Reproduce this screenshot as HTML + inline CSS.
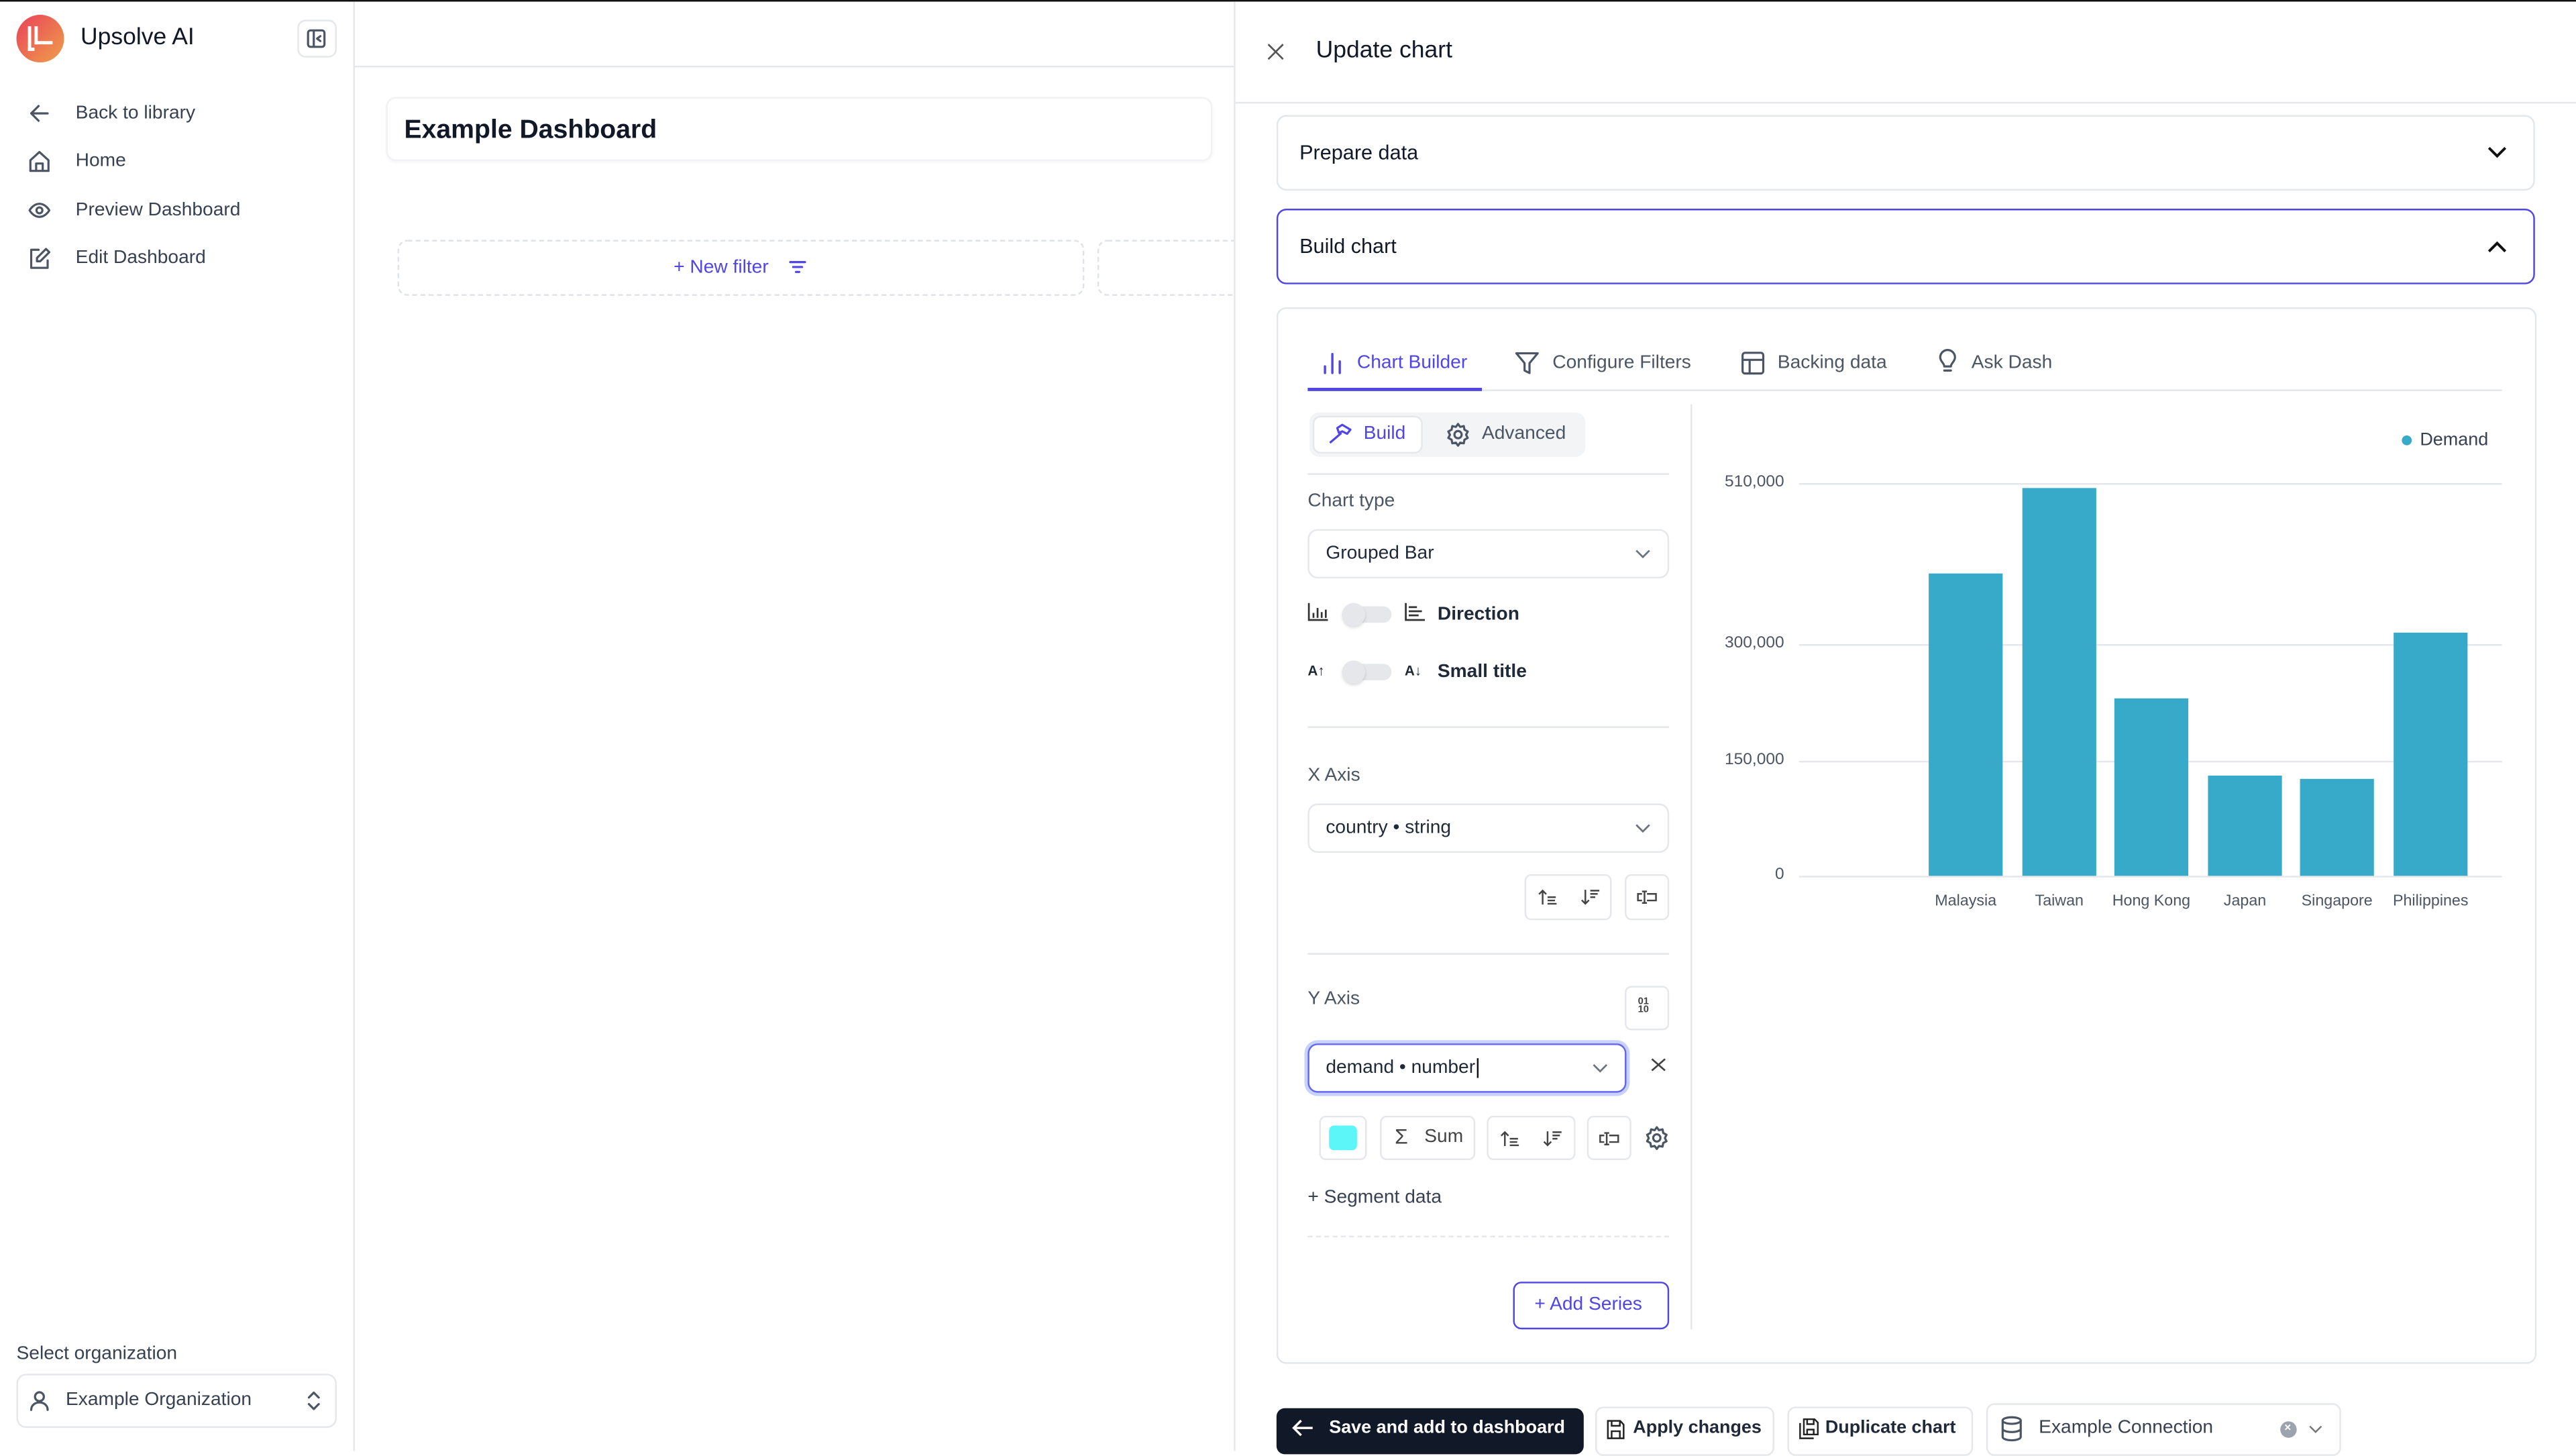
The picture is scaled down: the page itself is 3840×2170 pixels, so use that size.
<!DOCTYPE html>
<html><head><meta charset="utf-8"><style>
*{box-sizing:border-box;margin:0;padding:0}
html,body{width:3840px;height:2160px;overflow:hidden;background:#fff}
#w{position:absolute;left:0;top:0;width:1568px;height:882px;transform:scale(2.44898);transform-origin:0 0;font-family:"Liberation Sans",sans-serif;color:#111827;background:#fff;border-top:1px solid #111}
.a{position:absolute}
.t{position:absolute;white-space:nowrap;line-height:1}
.nav{font-size:11.5px;color:#374151}
.box{position:absolute;border:1px solid #e5e7eb;border-radius:6px;background:#fff}
.lbl{font-size:11.5px;color:#4b5563}
.hl{position:absolute;height:1px;background:#e5e7eb}
svg{position:absolute;overflow:visible}
.ic{fill:none;stroke:#4b5563;stroke-width:1.3;stroke-linecap:round;stroke-linejoin:round}
</style></head><body><div id="w">
<div class="a" style="left:215px;top:0;width:1px;height:882px;background:#e5e7eb"></div>
<div class="a" style="left:10px;top:8px;width:29px;height:29px;border-radius:50%;background:linear-gradient(135deg,#e8405a,#f0a04a)"></div>
<div class="a" style="left:17px;top:15px;width:4px;height:15px;border-left:2px solid #fff;border-bottom:2px solid #fff"></div>
<div class="a" style="left:21px;top:15px;width:11px;height:11px;border-left:2px solid #fff;border-bottom:2px solid #fff"></div>
<div class="t" style="left:49px;top:15px;font-size:14.5px;color:#111827">Upsolve AI</div>
<div class="a" style="left:181px;top:11px;width:24px;height:23px;border:1px solid #e5e7eb;border-radius:5px"></div>
<svg style="left:187px;top:17px" width="12" height="12"><rect x="0.5" y="0.5" width="10" height="10" rx="1.5" class="ic"/><path d="M4 1v9M8 4l-2 1.5L8 7" class="ic"/></svg>
<svg style="left:17px;top:61px" width="14" height="14"><path d="M12 7H2M6.5 2.5L2 7l4.5 4.5" class="ic"/></svg>
<div class="t nav" style="left:46px;top:63px">Back to library</div>
<svg style="left:17px;top:90px" width="14" height="14"><path d="M1.5 6.5L7 1.5l5.5 5v6.5h-11zM5 13V8.5h4V13" class="ic"/></svg>
<div class="t nav" style="left:46px;top:92px">Home</div>
<svg style="left:17px;top:120px" width="14" height="14"><path d="M1 7s2.2-4 6-4 6 4 6 4-2.2 4-6 4-6-4-6-4z" class="ic"/><circle cx="7" cy="7" r="1.8" class="ic"/></svg>
<div class="t nav" style="left:46px;top:122px">Preview Dashboard</div>
<svg style="left:17px;top:149px" width="14" height="14"><path d="M6.5 2H2v11h10V8.5M11 1.5l2 2L7.5 9H5.5V7z" class="ic"/></svg>
<div class="t nav" style="left:46px;top:151px">Edit Dashboard</div>
<div class="t" style="left:10px;top:818px;font-size:11.5px;color:#374151">Select organization</div>
<div class="box" style="left:10px;top:835px;width:195px;height:33px"></div>
<svg style="left:18px;top:845px" width="13" height="13"><circle cx="6" cy="4" r="2.7" class="ic"/><path d="M1 12c0-3 2.5-4.5 5-4.5s5 1.5 5 4.5" class="ic"/></svg>
<div class="t" style="left:40px;top:846px;font-size:11.5px;color:#374151">Example Organization</div>
<svg style="left:187px;top:845px" width="8" height="13"><path d="M1 4.5L4 1.5l3 3M1 8.5l3 3 3-3" class="ic" stroke-width="1"/></svg>
<div class="hl" style="left:216px;top:39px;width:535px"></div>
<div class="a" style="left:235px;top:58px;width:503px;height:39px;border:1px solid #f1f2f4;border-radius:6px;box-shadow:0 1px 2px rgba(0,0,0,.04)"></div>
<div class="t" style="left:246px;top:71px;font-size:16px;font-weight:bold;color:#111827">Example Dashboard</div>
<div class="a" style="left:242px;top:145px;width:418px;height:34px;border:1px dashed #dfe2e7;border-radius:6px"></div>
<div class="a" style="left:668px;top:145px;width:90px;height:34px;border:1px dashed #dfe2e7;border-radius:6px"></div>
<div class="t" style="left:410px;top:157px;font-size:11.5px;color:#4f46e5">+ New filter</div>
<svg style="left:480px;top:157px" width="11" height="10"><path d="M1 1.5h9M2.8 4.5h5.4M4.5 7.5h2" stroke="#4f46e5" stroke-width="1.3" fill="none" stroke-linecap="round"/></svg>
<div class="t" style="left:755px;top:441px;font-size:9px;color:#555;letter-spacing:-1px">⠿</div>
<div class="a" style="left:751px;top:0;width:817px;height:882px;background:#fff;border-left:1px solid #e5e7eb"></div>
<svg style="left:771px;top:25px" width="10" height="10"><path d="M1 1l9 9M10 1l-9 9" stroke="#555" stroke-width="1.1"/></svg>
<div class="t" style="left:801px;top:23px;font-size:14.5px;color:#111827">Update chart</div>
<div class="hl" style="left:752px;top:61px;width:816px"></div>
<div class="box" style="left:777px;top:69px;width:766px;height:46px;border-color:#e3e6ea"></div>
<div class="t" style="left:791px;top:86px;font-size:12.5px;color:#111827">Prepare data</div>
<svg style="left:1514px;top:88px" width="12" height="8"><path d="M1 1l5 5 5-5" stroke="#111" stroke-width="1.6" fill="none"/></svg>
<div class="box" style="left:777px;top:126px;width:766px;height:46px;border-color:#4f46e5"></div>
<div class="t" style="left:791px;top:143px;font-size:12.5px;color:#111827">Build chart</div>
<svg style="left:1514px;top:145px" width="12" height="8"><path d="M1 7l5-5 5 5" stroke="#111" stroke-width="1.6" fill="none"/></svg>
<div class="box" style="left:777px;top:186px;width:767px;height:643px;border-color:#e3e6ea"></div>
<div class="hl" style="left:796px;top:236px;width:727px"></div>
<div class="a" style="left:796px;top:235px;width:106px;height:2px;background:#4f46e5"></div>
<svg style="left:805px;top:213px" width="12" height="14"><path d="M1.5 13V9M6 13V1.5M10.5 13V6" stroke="#4f46e5" stroke-width="1.4" fill="none" stroke-linecap="round"/></svg>
<div class="t" style="left:826px;top:215px;font-size:11.5px;color:#4f46e5">Chart Builder</div>
<svg style="left:922px;top:213px" width="15" height="14"><path d="M1 1h13L9 7v6L6 11.5V7z" class="ic"/></svg>
<div class="t" style="left:945px;top:215px;font-size:11.5px;color:#4b5563">Configure Filters</div>
<svg style="left:1060px;top:213px" width="14" height="14"><rect x="0.7" y="0.7" width="12.6" height="12.6" rx="1.5" class="ic"/><path d="M0.7 5h12.6M5 5v8.3" class="ic"/></svg>
<div class="t" style="left:1082px;top:215px;font-size:11.5px;color:#4b5563">Backing data</div>
<svg style="left:1180px;top:212px" width="11" height="15"><path d="M3.5 10C3.5 8 1 7 1 4.5a4.5 4.5 0 019 0C10 7 7.5 8 7.5 10zM3.5 12.5h4" class="ic"/></svg>
<div class="t" style="left:1200px;top:215px;font-size:11.5px;color:#4b5563">Ask Dash</div>
<div class="a" style="left:1029px;top:245px;width:1px;height:563px;background:#e5e7eb"></div>
<div class="a" style="left:797px;top:250px;width:168px;height:27px;background:#f3f4f6;border-radius:6px"></div>
<div class="a" style="left:799px;top:252px;width:67px;height:23px;background:#fff;border:1px solid #e5e7eb;border-radius:5px"></div>
<svg style="left:808px;top:256px" width="16" height="14"><path d="M1.5 12.5l7-6M6 3.5l3-2 5 3-2 2.5-3-1.5-2 1z" stroke="#4f46e5" stroke-width="1.3" fill="none" stroke-linejoin="round"/></svg>
<div class="t" style="left:830px;top:258px;font-size:11.5px;color:#4f46e5">Build</div>
<svg style="left:880px;top:256px" width="15" height="15"><circle cx="7.5" cy="7.5" r="2.2" class="ic"/><path d="M7.5 1l1.3 1.8 2.2-.5.4 2.2 2 1.1-1 2 1 1.9-2 1.1-.4 2.2-2.2-.4-1.3 1.8-1.3-1.8-2.2.4-.4-2.2-2-1.1 1-1.9-1-2 2-1.1.4-2.2 2.2.5z" class="ic" stroke-width="1.1"/></svg>
<div class="t" style="left:902px;top:258px;font-size:11.5px;color:#4b5563">Advanced</div>
<div class="hl" style="left:796px;top:287px;width:220px"></div>
<div class="t lbl" style="left:796px;top:299px">Chart type</div>
<div class="box" style="left:796px;top:321px;width:220px;height:30px"></div>
<div class="t" style="left:807px;top:331px;font-size:11.5px;color:#1f2937">Grouped Bar</div>
<svg style="left:995px;top:333px" width="10" height="6"><path d="M1 1l4 4 4-4" stroke="#6b7280" stroke-width="1.1" fill="none"/></svg>
<svg style="left:796px;top:366px" width="13" height="11"><path d="M.7 0v10.3h11.6M3.5 9V6M6 9V3M8.5 9V5.5M11 9V4" stroke="#333" stroke-width="1.1" fill="none"/></svg>
<div class="a" style="left:817px;top:368px;width:30px;height:10px;border-radius:5px;background:#e5e7eb"></div>
<div class="a" style="left:817px;top:366px;width:14px;height:14px;border-radius:50%;background:#e5e7eb;box-shadow:0 1px 2px rgba(0,0,0,.15)"></div>
<svg style="left:855px;top:366px" width="13" height="11"><path d="M.7 0v10.3h11.6M2.5 2.5h5M2.5 5h8M2.5 7.5h6" stroke="#333" stroke-width="1.1" fill="none"/></svg>
<div class="t" style="left:875px;top:368px;font-size:11.5px;font-weight:bold;color:#1f2937">Direction</div>
<div class="t" style="left:796px;top:403px;font-size:8.5px;font-weight:bold;color:#1f2937">A↑</div>
<div class="a" style="left:817px;top:403px;width:30px;height:10px;border-radius:5px;background:#e5e7eb"></div>
<div class="a" style="left:817px;top:401px;width:14px;height:14px;border-radius:50%;background:#e5e7eb;box-shadow:0 1px 2px rgba(0,0,0,.15)"></div>
<div class="t" style="left:855px;top:403px;font-size:8.5px;font-weight:bold;color:#1f2937">A↓</div>
<div class="t" style="left:875px;top:403px;font-size:11.5px;font-weight:bold;color:#1f2937">Small title</div>
<div class="hl" style="left:796px;top:441px;width:220px"></div>
<div class="t lbl" style="left:796px;top:466px">X Axis</div>
<div class="box" style="left:796px;top:488px;width:220px;height:30px"></div>
<div class="t" style="left:807px;top:498px;font-size:11.5px;color:#1f2937">country • string</div>
<svg style="left:995px;top:500px" width="10" height="6"><path d="M1 1l4 4 4-4" stroke="#6b7280" stroke-width="1.1" fill="none"/></svg>
<div class="box" style="left:928px;top:531px;width:53px;height:28px;border-radius:4px"></div>
<div class="box" style="left:989px;top:531px;width:27px;height:28px;border-radius:4px"></div>
<svg style="left:936px;top:540px" width="12" height="10"><path d="M3 9.5V1M.8 3.2L3 1l2.2 2.2M6 5h5M6 7h4.5M6 9h5.5" stroke="#444" stroke-width="1" fill="none"/></svg>
<svg style="left:962px;top:540px" width="12" height="10"><path d="M3 0.5V9M.8 6.8L3 9l2.2-2.2M6 1h5.5M6 3h4.5M6 5h3" stroke="#444" stroke-width="1" fill="none"/></svg>
<svg style="left:996px;top:540px" width="13" height="10"><path d="M5 1.5v7M3.5 1.5h3M3.5 8.5h3M3.5 3H1v4h2.5M6.5 3H12v4H6.5" stroke="#444" stroke-width="1" fill="none"/></svg>
<div class="hl" style="left:796px;top:579px;width:220px"></div>
<div class="t lbl" style="left:796px;top:602px">Y Axis</div>
<div class="box" style="left:989px;top:599px;width:27px;height:27px;border-radius:4px"></div>
<div class="t" style="left:997px;top:607px;font-size:6px;line-height:5px;color:#444;font-weight:bold">01<br>10</div>
<div class="a" style="left:796px;top:634px;width:194px;height:30px;border:1.5px solid #6366f1;border-radius:6px;box-shadow:0 0 0 2px #c7d2fe"></div>
<div class="t" style="left:807px;top:644px;font-size:11.5px;color:#1f2937">demand • number<span style="border-left:1px solid #111;margin-left:1px"></span></div>
<svg style="left:969px;top:646px" width="10" height="6"><path d="M1 1l4 4 4-4" stroke="#6b7280" stroke-width="1.1" fill="none"/></svg>
<svg style="left:1005px;top:643px" width="9" height="8"><path d="M.5.5l8 7M8.5.5l-8 7" stroke="#444" stroke-width="1.1"/></svg>
<div class="box" style="left:803px;top:678px;width:29px;height:27px;border-radius:4px"></div>
<div class="a" style="left:809px;top:684px;width:17px;height:15px;background:#5cf6f8;border-radius:3px"></div>
<div class="box" style="left:840px;top:678px;width:58px;height:27px;border-radius:4px"></div>
<div class="t" style="left:849px;top:684px;font-size:13px;color:#444">Σ</div>
<div class="t" style="left:867px;top:686px;font-size:11.5px;color:#444">Sum</div>
<div class="box" style="left:905px;top:678px;width:54px;height:27px;border-radius:4px"></div>
<svg style="left:913px;top:687px" width="12" height="10"><path d="M3 9.5V1M.8 3.2L3 1l2.2 2.2M6 5h5M6 7h4.5M6 9h5.5" stroke="#444" stroke-width="1" fill="none"/></svg>
<svg style="left:939px;top:687px" width="12" height="10"><path d="M3 0.5V9M.8 6.8L3 9l2.2-2.2M6 1h5.5M6 3h4.5M6 5h3" stroke="#444" stroke-width="1" fill="none"/></svg>
<div class="box" style="left:966px;top:678px;width:27px;height:27px;border-radius:4px"></div>
<svg style="left:973px;top:687px" width="13" height="10"><path d="M5 1.5v7M3.5 1.5h3M3.5 8.5h3M3.5 3H1v4h2.5M6.5 3H12v4H6.5" stroke="#444" stroke-width="1" fill="none"/></svg>
<svg style="left:1001px;top:684px" width="15" height="15"><circle cx="7.5" cy="7.5" r="2.2" class="ic"/><path d="M7.5 1l1.3 1.8 2.2-.5.4 2.2 2 1.1-1 2 1 1.9-2 1.1-.4 2.2-2.2-.4-1.3 1.8-1.3-1.8-2.2.4-.4-2.2-2-1.1 1-1.9-1-2 2-1.1.4-2.2 2.2.5z" class="ic" stroke-width="1.1"/></svg>
<div class="t" style="left:796px;top:723px;font-size:11.5px;color:#374151">+ Segment data</div>
<div class="a" style="left:796px;top:751px;width:220px;border-top:1px dashed #e5e7eb"></div>
<div class="a" style="left:921px;top:779px;width:95px;height:29px;border:1px solid #4f46e5;border-radius:5px"></div>
<div class="t" style="left:934px;top:788px;font-size:11.5px;color:#4f46e5">+ Add Series</div>
<div class="a" style="left:1462px;top:264px;width:6px;height:6px;border-radius:50%;background:#38aac9"></div>
<div class="t" style="left:1473px;top:262px;font-size:11px;color:#374151">Demand</div>
<div class="hl" style="left:1095px;top:293px;width:428px"></div>
<div class="hl" style="left:1095px;top:391px;width:428px"></div>
<div class="hl" style="left:1095px;top:462px;width:428px"></div>
<div class="hl" style="left:1095px;top:532px;width:428px"></div>
<div class="t" style="right:482px;top:288px;font-size:10px;color:#4b5563">510,000</div>
<div class="t" style="right:482px;top:386px;font-size:10px;color:#4b5563">300,000</div>
<div class="t" style="right:482px;top:457px;font-size:10px;color:#4b5563">150,000</div>
<div class="t" style="right:482px;top:527px;font-size:10px;color:#4b5563">0</div>
<div class="a" style="left:1174px;top:348px;width:45px;height:184px;background:#38aac9"></div>
<div class="a" style="left:1231px;top:296px;width:45px;height:236px;background:#38aac9"></div>
<div class="a" style="left:1287px;top:424px;width:45px;height:108px;background:#38aac9"></div>
<div class="a" style="left:1344px;top:471px;width:45px;height:61px;background:#38aac9"></div>
<div class="a" style="left:1400px;top:473px;width:45px;height:59px;background:#38aac9"></div>
<div class="a" style="left:1457px;top:384px;width:45px;height:148px;background:#38aac9"></div>
<div class="t" style="left:1156px;width:81px;text-align:center;top:543px;font-size:9.5px;color:#4b5563">Malaysia</div>
<div class="t" style="left:1213px;width:81px;text-align:center;top:543px;font-size:9.5px;color:#4b5563">Taiwan</div>
<div class="t" style="left:1269px;width:81px;text-align:center;top:543px;font-size:9.5px;color:#4b5563">Hong Kong</div>
<div class="t" style="left:1326px;width:81px;text-align:center;top:543px;font-size:9.5px;color:#4b5563">Japan</div>
<div class="t" style="left:1382px;width:81px;text-align:center;top:543px;font-size:9.5px;color:#4b5563">Singapore</div>
<div class="t" style="left:1439px;width:81px;text-align:center;top:543px;font-size:9.5px;color:#4b5563">Philippines</div>
<div class="a" style="left:777px;top:856px;width:187px;height:28px;background:#111827;border-radius:5px"></div>
<svg style="left:786px;top:862px" width="14" height="12"><path d="M13 6H1.5M6 1.5L1.5 6 6 10.5" stroke="#fff" stroke-width="1.4" fill="none"/></svg>
<div class="t" style="left:809px;top:863px;font-size:11px;font-weight:bold;color:#fff">Save and add to dashboard</div>
<div class="box" style="left:971px;top:855px;width:109px;height:30px;border-radius:5px"></div>
<svg style="left:978px;top:863px" width="11" height="12"><path d="M.7.7h7.5L10.3 3v8.3H.7zM3 .7v3h5v-3M3 11.3V7h5v4.3" stroke="#222" stroke-width="1" fill="none"/></svg>
<div class="t" style="left:994px;top:863px;font-size:11px;font-weight:bold;color:#1f2937">Apply changes</div>
<div class="box" style="left:1088px;top:855px;width:113px;height:30px;border-radius:5px"></div>
<svg style="left:1095px;top:862px" width="12" height="13"><path d="M3 .7h6.5l2 2V10H3zM.7 3v9.3H9M5 .7v3h4v-3M5 10V7h4v3" stroke="#222" stroke-width="1" fill="none"/></svg>
<div class="t" style="left:1111px;top:863px;font-size:11px;font-weight:bold;color:#1f2937">Duplicate chart</div>
<div class="box" style="left:1209px;top:853px;width:216px;height:32px;border-radius:5px"></div>
<svg style="left:1218px;top:861px" width="13" height="15"><ellipse cx="6.5" cy="2.5" rx="5.5" ry="2" class="ic" stroke="#888"/><path d="M1 2.5v10c0 1.1 2.5 2 5.5 2s5.5-.9 5.5-2v-10M1 7.5c0 1.1 2.5 2 5.5 2s5.5-.9 5.5-2" class="ic" stroke="#888"/></svg>
<div class="t" style="left:1241px;top:863px;font-size:11.5px;color:#374151">Example Connection</div>
<div class="a" style="left:1388px;top:864px;width:10px;height:10px;border-radius:50%;background:#9ca3af"></div>
<div class="t" style="left:1390.5px;top:865px;font-size:7px;color:#fff;font-weight:bold">×</div>
<svg style="left:1405px;top:866px" width="9" height="6"><path d="M1 1l3.5 3.5L8 1" stroke="#777" stroke-width="1" fill="none"/></svg>
</div></body></html>
